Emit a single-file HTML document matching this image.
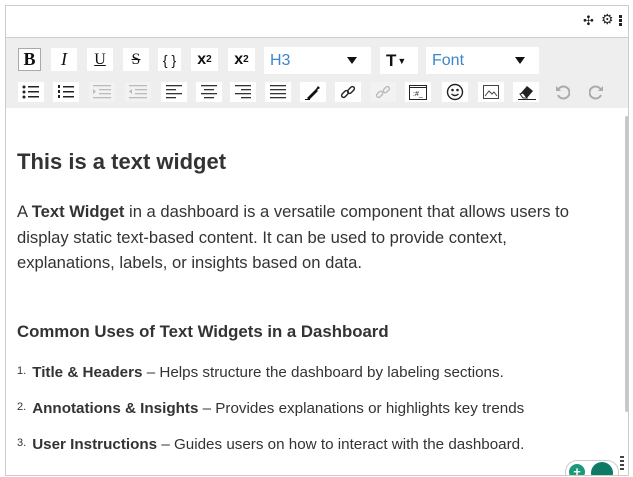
<!DOCTYPE html>
<html><head><style>
body{margin:0;width:633px;height:477px;background:#fff;font-family:"Liberation Sans",sans-serif;overflow:hidden;position:relative}
.w{position:absolute;left:5px;top:5px;width:622px;height:469px;border:1px solid #ccc;overflow:hidden}
.hdr{height:31px;border-bottom:1px solid #ccc;position:relative}
.tb{position:absolute;left:0;top:32px;width:622px;height:70px;background:#eee}
.b{position:absolute;height:21px;background:#fff;display:flex;align-items:center;justify-content:center;font-size:15px;color:#111}
.r1{top:10px;height:23px}
.r2{top:44px;height:20px}
.sel{position:absolute;top:9px;height:27px;background:#fff;color:#3b87c8;font-size:16px;line-height:27px;padding-left:6px;box-sizing:border-box}
.sel:after{content:"";position:absolute;right:14px;top:10px;border:5px solid transparent;border-top:7px solid #111;border-bottom:0}
.c{position:absolute;left:0;top:103px;width:622px;color:#333}
h1{position:absolute;left:11px;top:40px;margin:0;font-size:22px;font-weight:bold;color:#333}
p{position:absolute;left:11px;top:90px;margin:0;font-size:16.6px;line-height:25.5px;width:592px}
h3{position:absolute;left:11px;top:213px;margin:0;font-size:16.8px;font-weight:bold}
.li{position:absolute;left:11px;font-size:15.2px}
.li sup{font-size:11px;position:relative;top:-3px;margin-right:6px;vertical-align:baseline}
.sb{position:absolute;left:619px;top:110px;width:5px;height:296px;background:#c8c8c8;border-radius:2px}
svg{display:block}
</style></head><body>
<div class="w">
<div class="hdr">
<span style="position:absolute;left:577px;top:7px;font-size:13px;color:#222">✣</span>
<span style="position:absolute;left:595px;top:5px;font-size:14px;color:#222">⚙</span>
<span style="position:absolute;left:613px;top:9px;width:3px;height:11px;background:repeating-linear-gradient(#222 0 3px,transparent 3px 4px)"></span>
</div>
<div class="tb">
<div class="b r1" style="left:12px;width:23px;font-weight:bold;font-family:'Liberation Serif';font-size:18px;border:1px solid #aaa;box-sizing:border-box">B</div>
<div class="b r1" style="left:45px;width:26px;font-style:italic;font-family:'Liberation Serif';font-size:18px">I</div>
<div class="b r1" style="left:81px;width:26px;text-decoration:underline;font-family:'Liberation Serif';font-size:16px">U</div>
<div class="b r1" style="left:117px;width:26px;text-decoration:line-through;font-family:'Liberation Serif';font-size:16px">S</div>
<div class="b r1" style="left:152px;width:23px;font-size:14px">{ }</div>
<div class="b r1" style="left:185px;width:27px;font-weight:bold;font-size:16px">x<sup style="font-size:10px">2</sup></div>
<div class="b r1" style="left:222px;width:27px;font-weight:bold;font-size:16px">x<sub style="font-size:10px">2</sub></div>
<div class="sel" style="left:258px;width:107px">H3</div>
<div class="b r1" style="left:374px;width:38px;top:9px;height:27px;font-weight:bold;font-size:17px;justify-content:flex-start;padding-left:6px;box-sizing:border-box">T<span style="font-size:9px;margin-left:1px">▼</span></div>
<div class="sel" style="left:420px;width:113px">Font</div>
<div class="b r2" style="left:12px;width:26px"><svg width="18" height="14"><g fill="#222"><circle cx="2" cy="2" r="1.5"/><circle cx="2" cy="7" r="1.5"/><circle cx="2" cy="12" r="1.5"/><rect x="6" y="1" width="11" height="1.5"/><rect x="6" y="6" width="11" height="1.5"/><rect x="6" y="11" width="11" height="1.5"/></g></svg></div>
<div class="b r2" style="left:47px;width:26px"><svg width="18" height="14"><g fill="#222"><rect x="1" y="0" width="2" height="3"/><rect x="1" y="5" width="2" height="3"/><rect x="1" y="10" width="2" height="3"/><rect x="6" y="1" width="11" height="1.5"/><rect x="6" y="6" width="11" height="1.5"/><rect x="6" y="11" width="11" height="1.5"/></g></svg></div>
<div class="b r2" style="left:83px;width:26px;background:#f2f2f2"><svg width="18" height="14"><g fill="#bbb"><rect x="0" y="0" width="18" height="1.3"/><rect x="6" y="4" width="12" height="1.3"/><rect x="6" y="8" width="12" height="1.3"/><rect x="0" y="12" width="18" height="1.3"/><path d="M0 4l3 2.5-3 2.5z"/></g></svg></div>
<div class="b r2" style="left:119px;width:26px;background:#f2f2f2"><svg width="18" height="14"><g fill="#bbb"><rect x="0" y="0" width="18" height="1.3"/><rect x="6" y="4" width="12" height="1.3"/><rect x="6" y="8" width="12" height="1.3"/><rect x="0" y="12" width="18" height="1.3"/><path d="M3 4l-3 2.5 3 2.5z"/></g></svg></div>
<div class="b r2" style="left:155px;width:26px"><svg width="16" height="14"><g fill="#333"><rect y="0" width="16" height="1.3"/><rect y="4" width="10" height="1.3"/><rect y="8" width="16" height="1.3"/><rect y="12" width="10" height="1.3"/></g></svg></div>
<div class="b r2" style="left:190px;width:26px"><svg width="16" height="14"><g fill="#333"><rect y="0" width="16" height="1.3"/><rect x="3" y="4" width="10" height="1.3"/><rect y="8" width="16" height="1.3"/><rect x="3" y="12" width="10" height="1.3"/></g></svg></div>
<div class="b r2" style="left:224px;width:26px"><svg width="16" height="14"><g fill="#333"><rect y="0" width="16" height="1.3"/><rect x="6" y="4" width="10" height="1.3"/><rect y="8" width="16" height="1.3"/><rect x="6" y="12" width="10" height="1.3"/></g></svg></div>
<div class="b r2" style="left:259px;width:26px"><svg width="16" height="14"><g fill="#333"><rect y="0" width="16" height="1.3"/><rect y="4" width="16" height="1.3"/><rect y="8" width="16" height="1.3"/><rect y="12" width="16" height="1.3"/></g></svg></div>
<div class="b r2" style="left:294px;width:26px"><svg width="16" height="16"><path d="M2 14L11 5l2 2-9 9z M11 5l2-3 2 2-3 2" fill="#111"/><rect x="0" y="15" width="5" height="1" fill="#111"/></svg></div>
<div class="b r2" style="left:329px;width:26px"><svg width="16" height="16" fill="none" stroke="#222" stroke-width="1.4"><rect x="1" y="8" width="8" height="4" rx="2" transform="rotate(-45 5 10)"/><rect x="7" y="4" width="8" height="4" rx="2" transform="rotate(-45 11 6)"/></svg></div>
<div class="b r2" style="left:364px;width:26px;background:#f2f2f2"><svg width="16" height="16" fill="none" stroke="#bbb" stroke-width="1.4"><rect x="1" y="8" width="7" height="4" rx="2" transform="rotate(-45 5 10)"/><rect x="8" y="4" width="7" height="4" rx="2" transform="rotate(-45 11 6)"/></svg></div>
<div class="b r2" style="left:399px;width:26px"><svg width="20" height="17" fill="none" stroke="#222"><rect x="1.5" y="1.5" width="17" height="14"/><line x1="1" y1="3.5" x2="19" y2="3.5"/><text x="5" y="12" font-size="7" fill="#222" stroke="none" font-family="Liberation Sans">:#_</text></svg></div>
<div class="b r2" style="left:436px;width:26px"><svg width="18" height="18" fill="none" stroke="#222" stroke-width="1.4"><circle cx="9" cy="9" r="7.5"/><circle cx="6.5" cy="7" r=".6" fill="#222"/><circle cx="11.5" cy="7" r=".6" fill="#222"/><path d="M5.5 11q3.5 3 7 0"/></svg></div>
<div class="b r2" style="left:472px;width:26px"><svg width="16" height="14" fill="none" stroke="#444"><rect x=".5" y=".5" width="15" height="13"/><path d="M2 11l4-5 3 3 2-2 3 4"/></svg></div>
<div class="b r2" style="left:507px;width:26px"><svg width="20" height="16"><path d="M4 10l7-8 6 5-6 7H7z" fill="#222"/><path d="M4 10l3 4h4l-4-5z" fill="#fff" stroke="#222"/><rect x="2" y="15" width="18" height="1" fill="#222"/></svg></div>
<div class="b r2" style="left:543px;width:26px;background:#eee"><svg width="16" height="16" fill="none" stroke="#aaa" stroke-width="2"><path d="M4 6a6 6 0 1 1 0 5"/><path d="M2 2v5h5" fill="#aaa" stroke="none"/></svg></div>
<div class="b r2" style="left:578px;width:26px;background:#eee"><svg width="16" height="16" fill="none" stroke="#aaa" stroke-width="2"><path d="M12 6a6 6 0 1 0 0 5"/><path d="M14 2v5H9" fill="#aaa" stroke="none"/></svg></div>
</div>
<div class="c">
<h1>This is a text widget</h1>
<p>A <b>Text Widget</b> in a dashboard is a versatile component that allows users to display static text-based content. It can be used to provide context, explanations, labels, or insights based on data.</p>
<h3>Common Uses of Text Widgets in a Dashboard</h3>
<div class="li" style="top:255px"><sup>1.</sup><b>Title &amp; Headers</b> – Helps structure the dashboard by labeling sections.</div>
<div class="li" style="top:291px"><sup>2.</sup><b>Annotations &amp; Insights</b> – Provides explanations or highlights key trends</div>
<div class="li" style="top:327px"><sup>3.</sup><b>User Instructions</b> – Guides users on how to interact with the dashboard.</div>
</div>
<div class="sb"></div>
<div style="position:absolute;left:559px;top:454px;width:52px;height:24px;border:1px solid #ccc;border-radius:12px;background:#fff"></div>
<div style="position:absolute;left:563px;top:458px;width:16px;height:16px;border-radius:50%;background:#1a9a7a;color:#fff;font-size:13px;line-height:16px;text-align:center;font-weight:bold">+</div>
<div style="position:absolute;left:585px;top:456px;width:22px;height:22px;border-radius:50%;background:#0e7a66"></div>
<div style="position:absolute;left:614px;top:450px;width:4px;height:14px;background:repeating-linear-gradient(#444 0 2px,transparent 2px 4px)"></div>
</div>
</body></html>
